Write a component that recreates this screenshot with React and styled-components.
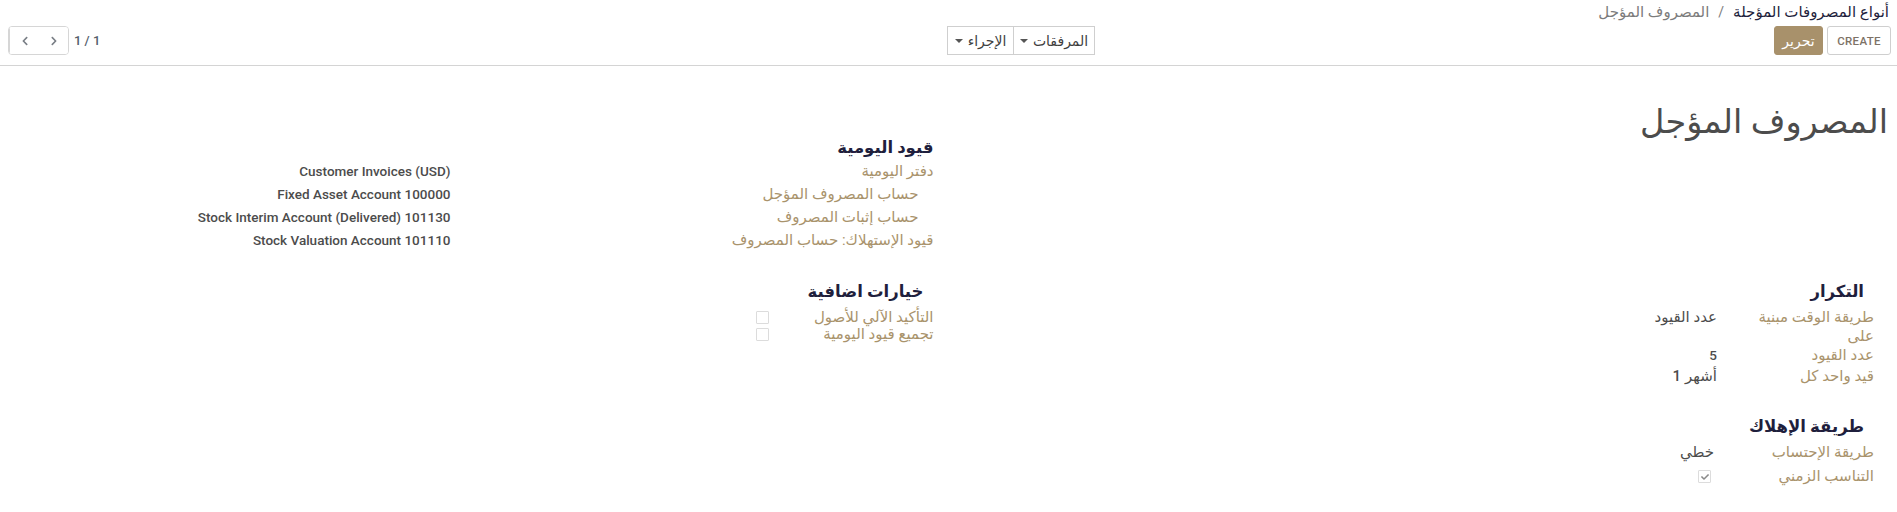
import React from "react";
import styled, { createGlobalStyle } from "styled-components";
import { FaChevronLeft, FaChevronRight, FaCheck } from "react-icons/fa";

const GlobalStyle = createGlobalStyle`
  body {
    margin: 0;
    background: #fff;
    font-family: Roboto, "DejaVu Sans", sans-serif;
    font-size: 13px;
    color: #4c4c4c;
  }
`;

const Page = styled.div`
  direction: rtl;
  width: 1897px;
`;

const ControlPanel = styled.div`
  padding: 3px 6px 10px 8px;
  border-bottom: 1px solid #d4d4d4;
`;

const Breadcrumb = styled.div`
  display: flex;
  align-items: center;
  gap: 6px;
  margin-right: 2px;
  height: 19px;
  line-height: 19px;
  font-size: 15px;
`;

const Crumb = styled.span`
  color: ${(p) => (p.$active ? "#7c7c7c" : "#1f1f3d")};
`;

const Sep = styled.span`
  color: #7c7c7c;
  font-size: 14px;
  padding: 0 3px;
`;

const CpRow = styled.div`
  display: flex;
  margin-top: 4px;
  height: 29px;
`;

const CpMain = styled.div`
  flex: 0 0 796px;
  display: flex;
  gap: 4px;
`;

const CpSide = styled.div`
  flex: 1;
  display: flex;
  justify-content: space-between;
`;

const Button = styled.button`
  height: 29px;
  box-sizing: border-box;
  border-radius: 3px;
  font-family: Roboto, "DejaVu Sans", sans-serif;
  font-size: ${(p) => (p.$primary ? "14px" : "11.5px")};
  font-weight: 500;
  padding: 0;
  width: ${(p) => p.$w}px;
  cursor: pointer;
  border: 1px solid ${(p) => (p.$primary ? "#a8916b" : "#cfcfcf")};
  background: ${(p) => (p.$primary ? "#a8916b" : "#fff")};
  color: ${(p) => (p.$primary ? "#fff" : "#7d7266")};
  letter-spacing: ${(p) => (p.$primary ? "0" : "0.3px")};
`;

const BtnGroup = styled.div`
  display: flex;
  height: 29px;
`;

const DropBtn = styled.button`
  display: flex;
  align-items: center;
  justify-content: center;
  gap: 5px;
  height: 29px;
  width: ${(p) => p.$w}px;
  box-sizing: border-box;
  padding: 0;
  background: #fff;
  border: 1px solid #cfcfcf;
  margin-left: -1px;
  font-family: Roboto, "DejaVu Sans", sans-serif;
  font-size: 14px;
  color: #3f3f3f;
  direction: rtl;
`;

const Caret = styled.span`
  width: 0;
  height: 0;
  border-left: 4px solid transparent;
  border-right: 4px solid transparent;
  border-top: 4px solid #555;
`;

const Pager = styled.div`
  display: flex;
  align-items: center;
  gap: 5px;
`;

const PagerValue = styled.span`
  color: #55606c;
  font-size: 13px;
  font-weight: 500;
  direction: ltr;
`;

const PagerBtns = styled.div`
  display: flex;
  height: 29px;
  border: 1px solid #d6d6d6;
  border-radius: 4px;
  box-sizing: border-box;
  overflow: hidden;
`;

const PagerBtn = styled.button`
  width: ${(p) => p.$w}px;
  height: 27px;
  border: 0;
  background: #fff;
  padding: 0;
  display: flex;
  align-items: center;
  justify-content: center;
  color: #7a7f86;
  border-left: ${(p) => (p.$divider ? "1px solid #d6d6d6" : "0")};
`;

const Sheet = styled.div`
  padding: 24px 8px 0 8px;
`;

const FormGrid = styled.div`
  display: grid;
  grid-template-columns: 1fr 1fr;
  align-items: start;
`;

const Title = styled.h1`
  margin: 12px 1px 0 0;
  font-size: 33.5px;
  line-height: 40px;
  font-weight: normal;
  color: #4c4c4c;
`;

const Group = styled.div`
  margin-top: ${(p) => p.$mt || 0}px;
  padding-right: 15px;
`;

const GroupTitle = styled.div`
  font-size: 16.5px;
  font-weight: bold;
  line-height: 20px;
  color: #1f1f3d;
  padding-right: ${(p) => p.$inset}px;
  margin-bottom: ${(p) => p.$mb}px;
`;

const Row = styled.div`
  display: flex;
  align-items: flex-start;
  line-height: ${(p) => p.$lh || 19}px;
  padding-bottom: ${(p) => p.$pb ?? 4}px;
`;

const Label = styled.div`
  flex: 0 0 ${(p) => p.$w}px;
  box-sizing: border-box;
  padding-right: ${(p) => (p.$help ? 15 : 0)}px;
  font-size: 15px;
  color: #a9936c;
`;

const Value = styled.div`
  display: flex;
  gap: 4px;
  color: #4c4c4c;
  font-weight: 500;
  font-size: ${(p) => (p.$latin ? "13.5px" : "15px")};
`;

const Checkbox = styled.span`
  display: inline-flex;
  align-items: center;
  justify-content: center;
  width: 13px;
  height: 13px;
  margin-top: ${(p) => p.$mt}px;
  box-sizing: border-box;
  border: 1px solid #dcdcdc;
  border-radius: 1px;
  background: #fff;
  color: #8a8a8a;
`;

export default function App() {
  return (
    <Page>
      <GlobalStyle />
      <ControlPanel>
        <Breadcrumb>
          <Crumb>أنواع المصروفات المؤجلة</Crumb>
          <Sep>/</Sep>
          <Crumb $active>المصروف المؤجل</Crumb>
        </Breadcrumb>
        <CpRow>
          <CpMain>
            <Button $w={64}>CREATE</Button>
            <Button $primary $w={49}>
              تحرير
            </Button>
          </CpMain>
          <CpSide>
            <BtnGroup>
              <DropBtn $w={82}>
                المرفقات <Caret />
              </DropBtn>
              <DropBtn $w={67}>
                الإجراء <Caret />
              </DropBtn>
            </BtnGroup>
            <Pager>
              <PagerValue>1 / 1</PagerValue>
              <PagerBtns>
                <PagerBtn $w={29}>
                  <FaChevronRight size={10} />
                </PagerBtn>
                <PagerBtn $w={30} $divider>
                  <FaChevronLeft size={10} />
                </PagerBtn>
              </PagerBtns>
            </Pager>
          </CpSide>
        </CpRow>
      </ControlPanel>

      <Sheet>
        <FormGrid>
          <div>
            <Title>المصروف المؤجل</Title>
          </div>
          <Group $mt={48}>
            <GroupTitle $inset={-5} $mb={4}>
              قيود اليومية
            </GroupTitle>
            <Row>
              <Label $w={483}>دفتر اليومية</Label>
              <Value $latin dir="ltr">Customer Invoices (USD)</Value>
            </Row>
            <Row>
              <Label $w={483} $help>
                حساب المصروف المؤجل
              </Label>
              <Value $latin dir="ltr">Fixed Asset Account 100000</Value>
            </Row>
            <Row>
              <Label $w={483} $help>
                حساب إثبات المصروف
              </Label>
              <Value $latin dir="ltr">Stock Interim Account (Delivered) 101130</Value>
            </Row>
            <Row>
              <Label $w={483}>قيود الإستهلاك: حساب المصروف</Label>
              <Value $latin dir="ltr">Stock Valuation Account 101110</Value>
            </Row>
          </Group>

          <Group $mt={28}>
            <GroupTitle $inset={10} $mb={6}>
              التكرار
            </GroupTitle>
            <Row $pb={0}>
              <Label $w={157}>
                طريقة الوقت مبنية
                <br />
                على
              </Label>
              <Value>عدد القيود</Value>
            </Row>
            <Row $pb={2}>
              <Label $w={157}>عدد القيود</Label>
              <Value $latin>5</Value>
            </Row>
            <Row $pb={0}>
              <Label $w={157}>قيد واحد كل</Label>
              <Value>
                <span>أشهر</span>
                <span>1</span>
              </Value>
            </Row>
          </Group>
          <Group $mt={28}>
            <GroupTitle $inset={10} $mb={7}>
              خيارات اضافية
            </GroupTitle>
            <Row $lh={17} $pb={0}>
              <Label $w={165}>التأكيد الآلي للأصول</Label>
              <Checkbox $mt={2} />
            </Row>
            <Row $lh={17} $pb={0}>
              <Label $w={165}>تجميع قيود اليومية</Label>
              <Checkbox $mt={2} />
            </Row>
          </Group>

          <Group $mt={31}>
            <GroupTitle $inset={10} $mb={6}>
              طريقة الإهلاك
            </GroupTitle>
            <Row $pb={5}>
              <Label $w={160}>طريقة الإحتساب</Label>
              <Value>خطي</Value>
            </Row>
            <Row $pb={0}>
              <Label $w={163}>التناسب الزمني</Label>
              <Checkbox $mt={3}>
                <FaCheck size={8} />
              </Checkbox>
            </Row>
          </Group>
          <div />
        </FormGrid>
      </Sheet>
    </Page>
  );
}
